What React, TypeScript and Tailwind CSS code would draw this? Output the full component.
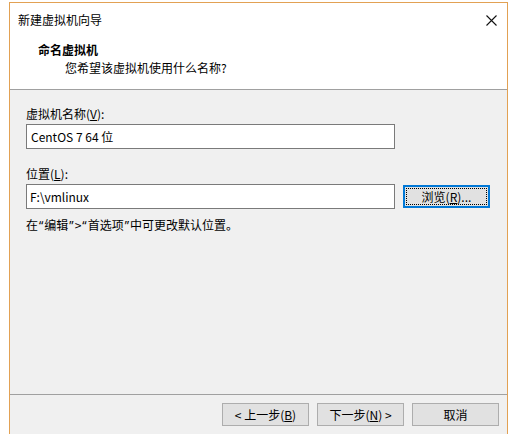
import React from "react";

const font = { fontFamily: '"Noto Sans CJK SC", "Noto Sans", sans-serif' };

function Q({ c }: { c: string }) {
  return <span className="mx-[1px] [font-family:'Noto_Sans',sans-serif]">{c}</span>;
}

export default function App() {
  return (
    <div
      className="w-[510px] h-[434px] bg-white overflow-hidden pt-[2px] pl-[9px] text-[12px] leading-[16px] text-black"
      style={font}
    >
      <div className="w-[499px] h-[440px] border border-[#e2a153] bg-[#f0f0f0] flex flex-col">
        {/* header */}
        <div className="h-[87px] bg-white border-b border-[#a0a0a0] flex flex-col">
          <div className="flex items-center justify-between pl-[8px] pr-[10px] pt-[7px] h-[27px]">
            <span>新建虚拟机向导</span>
            <svg width="11" height="11" viewBox="0 0 11 11" className="mt-[1px]">
              <path d="M0.5 0.5 L10.5 10.5 M10.5 0.5 L0.5 10.5" stroke="#111" strokeWidth="1.1" />
            </svg>
          </div>
          <div className="pl-[28px] pt-[12px] font-bold">命名虚拟机</div>
          <div className="pl-[55px] pt-[2px]">您希望该虚拟机使用什么名称?</div>
        </div>
        {/* body */}
        <div className="h-[304px] pl-[16px] pt-[16px] flex flex-col">
          <div>
            虚拟机名称(<span className="underline">V</span>):
          </div>
          <div className="mt-[2px] w-[369px] h-[25px] border border-[#7a7a7a] bg-white flex items-center pl-[4px]">
            CentOS 7 64 位
          </div>
          <div className="mt-[17px]">
            位置(<span className="underline">L</span>):
          </div>
          <div className="mt-[2px] flex items-start gap-[8px]">
            <div className="w-[369px] h-[25px] border border-[#7a7a7a] bg-white flex items-center pl-[3px]">
              F:\vmlinux
            </div>
            <div className="relative mt-[1px] w-[87px] h-[23px] border-2 border-[#0078d7] bg-[#e1e1e1] flex items-center justify-center">
              <div className="absolute inset-[1px] border border-dotted border-black" />
              <span>
                浏览(<span className="underline">R</span>)...
              </span>
            </div>
          </div>
          <div className="mt-[8px]">
            在<Q c="“" />编辑<Q c="”" />&gt;<Q c="“" />首选项<Q c="”" />中可更改默认位置。
          </div>
        </div>
        {/* footer */}
        <div className="border-t border-[#a0a0a0] pt-[8px] pl-[212px] flex gap-[8px]">
          <div className="w-[87px] h-[23px] border border-[#adadad] bg-[#e1e1e1] flex items-center justify-center">
            &lt; 上一步(<span className="underline">B</span>)
          </div>
          <div className="w-[87px] h-[23px] border border-[#adadad] bg-[#e1e1e1] flex items-center justify-center">
            下一步(<span className="underline">N</span>) &gt;
          </div>
          <div className="w-[87px] h-[23px] border border-[#adadad] bg-[#e1e1e1] flex items-center justify-center">
            取消
          </div>
        </div>
      </div>
    </div>
  );
}
